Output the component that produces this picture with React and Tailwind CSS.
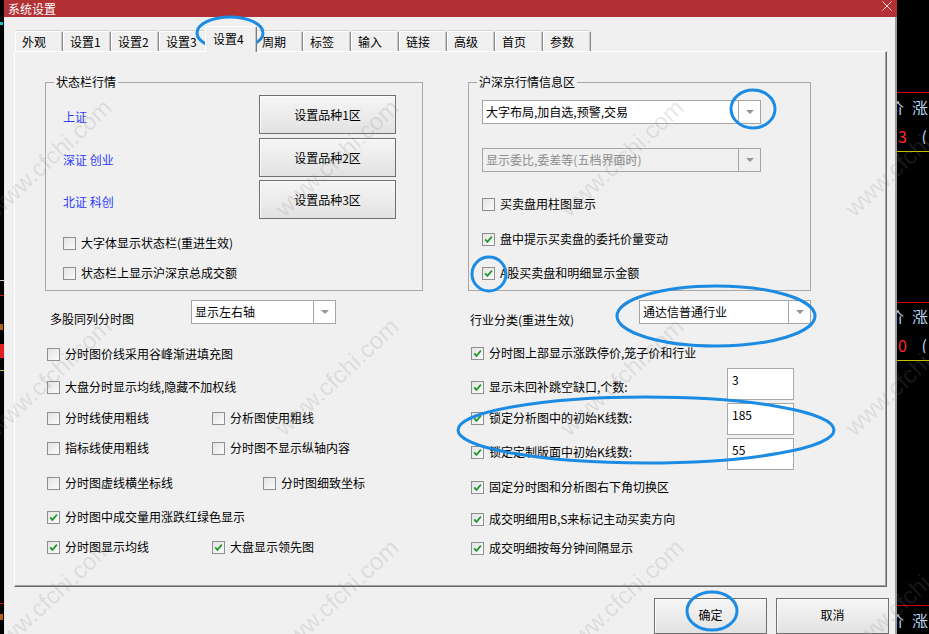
import React from "react";

const tabs = ["外观", "设置1", "设置2", "设置3", "设置4", "周期", "标签", "输入", "链接", "高级", "首页", "参数"];

// watermark spots, every class written out in full
const marks = [
  "left-[50px] top-[158px]",
  "left-[337px] top-[158px]",
  "left-[622px] top-[158px]",
  "left-[907px] top-[158px]",
  "left-[50px] top-[377px]",
  "left-[337px] top-[377px]",
  "left-[622px] top-[377px]",
  "left-[907px] top-[377px]",
  "left-[50px] top-[598px]",
  "left-[337px] top-[598px]",
  "left-[622px] top-[598px]",
  "left-[907px] top-[598px]",
];

function CheckBox({ checked }) {
  return (
    <span className="flex h-[13px] w-[13px] shrink-0 items-center justify-center border border-[#8f8f8f] bg-linear-to-br from-[#e4e4e4] to-[#fbfbfb]">
      {checked && (
        <svg width="9" height="9" viewBox="0 0 9 9">
          <path d="M1.2 4.4 L3.4 6.9 L7.9 1.6" fill="none" stroke="#1f9a2a" strokeWidth="1.7" />
        </svg>
      )}
    </span>
  );
}

function CheckRow({ checked, label, className = "" }) {
  return (
    <div className={`flex h-[16px] items-center gap-[5px] whitespace-nowrap leading-[16px] ${className}`}>
      <CheckBox checked={checked} />
      <span>{label}</span>
    </div>
  );
}

function Combo({ value, className = "", disabled }) {
  return (
    <div className={`flex h-[24px] shrink-0 border border-[#a5a5a5] ${disabled ? "bg-[#f0f0f0] text-[#8c8c8c]" : "bg-white"} ${className}`}>
      <div className="flex flex-1 items-center pl-[3px] leading-[16px] whitespace-nowrap">{value}</div>
      <div className="flex w-[22px] items-center justify-center border-l border-l-[#a5a5a5]">
        <svg width="8" height="4" viewBox="0 0 8 4">
          <path d="M0 0 L8 0 L4 4 Z" fill="#959595" />
        </svg>
      </div>
    </div>
  );
}

function Btn({ children, className = "" }) {
  return (
    <div className={`flex shrink-0 items-center justify-center border border-[#707070] bg-linear-to-b from-[#f6f6f6] to-[#e2e2e2] shadow-[inset_1px_1px_0_#fcfcfc] ${className}`}>
      {children}
    </div>
  );
}

function NumBox({ value }) {
  return (
    <div className="h-[32px] w-[67px] shrink-0 border border-[#a8a8a8] bg-white pl-[4px] pt-[3px] leading-[16px]">
      {value}
    </div>
  );
}

function QuoteHead({ className = "" }) {
  return (
    <div className={`flex overflow-hidden whitespace-nowrap text-[#b9d5f0] ${className}`}>
      <span className="-ml-[9px] shrink-0">价</span>
      <span className="ml-[8px] shrink-0">涨</span>
    </div>
  );
}

export default function App() {
  return (
    <div className="relative flex h-[634px] w-[929px] overflow-hidden bg-black font-['Noto_Sans_CJK_SC',sans-serif] text-[12px] text-black">
      {/* left strip of the quote screen behind */}
      <div className="flex w-[4px] shrink-0 flex-col">
        <div className="mt-[22px] h-[3px] w-[3px] bg-[#19c8c8]" />
        <div className="mt-[255px] h-[1px] w-[4px] bg-[#d0d0d0]" />
        <div className="mt-[14px] h-[1px] w-[4px] bg-[#d01010]" />
        <div className="mt-[28px] h-[6px] w-[3px] bg-[#b06010]" />
        <div className="mt-[14px] h-[14px] w-[4px] bg-[#e02020]" />
        <div className="mt-[12px] h-[1px] w-[4px] bg-[#c8c020]" />
        <div className="mt-[232px] h-[1px] w-[4px] bg-[#d01010]" />
        <div className="mt-[10px] h-[6px] w-[3px] bg-[#b06010]" />
      </div>

      {/* dialog */}
      <div className="flex w-[893px] shrink-0 flex-col bg-[#f0f0f0]">
        <div className="flex h-[19px] items-center justify-between bg-[#b33035] pl-[4px] pr-[5px] text-white">
          <span className="leading-[16px]">系统设置</span>
          <svg width="10" height="10" viewBox="0 0 10 10" className="mb-[5px]">
            <path d="M0.5 0.5 L9.5 9.5 M9.5 0.5 L0.5 9.5" stroke="#f3d6d6" strokeWidth="1" />
          </svg>
        </div>

        <div className="flex flex-1 flex-col border-l border-l-[#e6e6e6] border-r-[2px] border-r-[#9c9c9c]">
          {/* tabs */}
          <div className="flex h-[34px] items-end pl-[10px]">
            {tabs.map((t) =>
              t === "设置4" ? (
                <div
                  key={t}
                  className="relative z-10 -mx-[2px] -mb-[1px] flex h-[26px] w-[52px] items-center rounded-t-[2px] border-t border-l border-t-white border-l-white border-r border-r-[#7a7a7a] bg-[#f0f0f0] pl-[7px] pb-[2px] shadow-[inset_-1px_0_0_#c4c4c4]"
                >
                  {t}
                </div>
              ) : (
                <div
                  key={t}
                  className="flex h-[20px] w-[48px] items-center rounded-t-[2px] border-t border-l border-t-white border-l-white border-r border-r-[#8a8a8a] pl-[6px] shadow-[inset_-1px_0_0_#c8c8c8,0_-1px_0_#d4d4d4]"
                >
                  {t}
                </div>
              )
            )}
          </div>

          {/* tab page */}
          <div className="ml-[9px] flex h-[536px] w-[873px] gap-[45px] border-t border-l border-t-white border-l-white border-r border-b border-r-[#696969] border-b-[#696969] pl-[30px] pt-[22px] shadow-[inset_-1px_-1px_0_#a0a0a0]">
            {/* left column */}
            <div className="flex w-[378px] flex-col">
              <fieldset className="border border-[#a8a8a8]">
                <legend className="ml-[8px] px-[2px] leading-[16px]">状态栏行情</legend>
                <div className="mt-[5px] flex flex-col">
                  <div className="flex items-center">
                    <span className="w-[213px] pl-[17px] pt-[5px] text-[#2f3cff]">上证</span>
                    <Btn className="h-[39px] w-[137px]">设置品种1区</Btn>
                  </div>
                  <div className="mt-[4px] flex items-center">
                    <span className="w-[213px] pl-[17px] pt-[5px] text-[#2f3cff]">深证 创业</span>
                    <Btn className="h-[39px] w-[137px]">设置品种2区</Btn>
                  </div>
                  <div className="mt-[3px] flex items-center">
                    <span className="w-[213px] pl-[17px] pt-[5px] text-[#2f3cff]">北证 科创</span>
                    <Btn className="h-[39px] w-[137px]">设置品种3区</Btn>
                  </div>
                </div>
                <CheckRow className="ml-[17px] mt-[16px]" label="大字体显示状态栏(重进生效)" />
                <CheckRow className="ml-[17px] mt-[14px]" label="状态栏上显示沪深京总成交额" />
                <div className="h-[9px]" />
              </fieldset>

              <div className="mt-[9px] flex h-[24px] items-start">
                <span className="mt-[11px] w-[146px] pl-[5px] leading-[16px]">多股同列分时图</span>
                <Combo className="w-[145px]" value="显示左右轴" />
              </div>
              <CheckRow className="ml-[2px] mt-[22px]" label="分时图价线采用谷峰渐进填充图" />
              <CheckRow className="ml-[2px] mt-[17px]" label="大盘分时显示均线,隐藏不加权线" />
              <div className="ml-[2px] mt-[15px] flex">
                <CheckRow className="w-[165px]" label="分时线使用粗线" />
                <CheckRow label="分析图使用粗线" />
              </div>
              <div className="ml-[2px] mt-[14px] flex">
                <CheckRow className="w-[165px]" label="指标线使用粗线" />
                <CheckRow label="分时图不显示纵轴内容" />
              </div>
              <div className="ml-[2px] mt-[19px] flex">
                <CheckRow className="w-[216px]" label="分时图虚线横坐标线" />
                <CheckRow label="分时图细致坐标" />
              </div>
              <CheckRow className="ml-[2px] mt-[18px]" checked label="分时图中成交量用涨跌红绿色显示" />
              <div className="ml-[2px] mt-[14px] flex">
                <CheckRow className="w-[165px]" checked label="分时图显示均线" />
                <CheckRow checked label="大盘显示领先图" />
              </div>
            </div>

            {/* right column */}
            <div className="flex w-[343px] flex-col">
              <fieldset className="border border-[#a8a8a8]">
                <legend className="ml-[8px] px-[2px] leading-[16px]">沪深京行情信息区</legend>
                <Combo className="ml-[13px] mt-[10px] w-[279px]" value="大字布局,加自选,预警,交易" />
                <Combo className="ml-[13px] mt-[24px] w-[279px]" disabled value="显示委比,委差等(五档界面时)" />
                <CheckRow className="ml-[13px] mt-[24px]" label="买卖盘用柱图显示" />
                <CheckRow className="ml-[13px] mt-[19px]" checked label="盘中提示买卖盘的委托价量变动" />
                <CheckRow className="ml-[13px] mt-[18px]" checked label="A股买卖盘和明细显示金额" />
                <div className="h-[9px]" />
              </fieldset>

              <div className="mt-[9px] flex h-[24px] items-start">
                <span className="mt-[12px] w-[171px] pl-[2px] leading-[16px]">行业分类(重进生效)</span>
                <Combo className="w-[172px]" value="通达信普通行业" />
              </div>
              <CheckRow className="ml-[3px] mt-[21px]" checked label="分时图上部显示涨跌停价,笼子价和行业" />
              <div className="ml-[3px] mt-[7px] flex h-[32px] items-center">
                <CheckRow className="mt-[6px] w-[256px]" checked label="显示未回补跳空缺口,个数:" />
                <NumBox value="3" />
              </div>
              <div className="ml-[3px] mt-[3px] flex h-[32px] items-center">
                <CheckRow className="mb-[2px] w-[256px]" checked label="锁定分析图中的初始K线数:" />
                <NumBox value="185" />
              </div>
              <div className="ml-[3px] mt-[3px] flex h-[32px] items-center">
                <CheckRow className="mb-[4px] w-[256px]" checked label="锁定定制版面中初始K线数:" />
                <NumBox value="55" />
              </div>
              <CheckRow className="ml-[3px] mt-[9px]" checked label="固定分时图和分析图右下角切换区" />
              <CheckRow className="ml-[3px] mt-[16px]" checked label="成交明细用B,S来标记主动买卖方向" />
              <CheckRow className="ml-[3px] mt-[13px]" checked label="成交明细按每分钟间隔显示" />
            </div>
          </div>

          {/* dialog buttons */}
          <div className="mt-[11px] flex gap-[9px] pl-[649px]">
            <Btn className="h-[36px] w-[113px] pb-[2px]">确定</Btn>
            <Btn className="h-[36px] w-[113px] pb-[2px]">取消</Btn>
          </div>
        </div>
      </div>

      {/* quote screen on the right */}
      <div className="flex min-w-0 flex-1 flex-col text-[16px] leading-[16px]">
        <div className="mt-[92px] h-[1px] bg-[#d80000]" />
        <QuoteHead className="mt-[6px]" />
        <div className="mt-[13px] flex justify-between overflow-hidden whitespace-nowrap text-[#ff2a2a]">
          <span className="pl-[1px]">3</span>
          <span className="pr-[2px] text-[#b9d5f0]">(</span>
        </div>
        <div className="mt-[7px] h-[1px] bg-[#c8c000]" />
        <div className="mt-[150px] h-[1px] bg-[#d80000]" />
        <QuoteHead className="mt-[5px]" />
        <div className="mt-[13px] flex justify-between overflow-hidden whitespace-nowrap text-[#ff2a2a]">
          <span className="pl-[1px]">0</span>
          <span className="pr-[2px] text-[#b9d5f0]">(</span>
        </div>
        <div className="mt-[7px] h-[1px] bg-[#c8c000]" />
        <div className="mt-[244px] h-[1px] bg-[#d80000]" />
        <QuoteHead className="mt-[6px]" />
      </div>

      {/* watermark */}
      <div className="pointer-events-none absolute inset-0">
        {marks.map((m) => (
          <span
            key={m}
            className={`absolute ${m} -translate-x-1/2 -translate-y-1/2 -rotate-[43deg] whitespace-nowrap font-['Liberation_Sans',sans-serif] text-[24px] text-[#80808030]`}
          >
            www.cfchi.com
          </span>
        ))}
      </div>

      {/* blue marker circles */}
      <svg className="pointer-events-none absolute inset-0" width="929" height="634" viewBox="0 0 929 634">
        <g fill="none" stroke="#1b8be3" strokeWidth="3">
          <ellipse cx="230" cy="33" rx="33" ry="16" />
          <ellipse cx="753" cy="109" rx="22" ry="19" />
          <ellipse cx="489" cy="274" rx="17" ry="17" />
          <ellipse cx="716" cy="316" rx="99" ry="30" />
          <ellipse cx="646" cy="430" rx="188" ry="33" />
          <ellipse cx="712" cy="611" rx="25" ry="19" />
        </g>
      </svg>
    </div>
  );
}
